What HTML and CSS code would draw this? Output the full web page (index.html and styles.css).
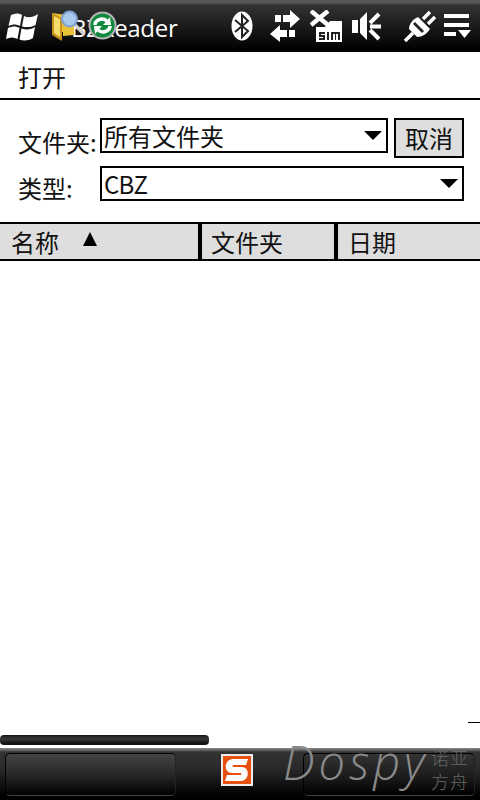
FILE: index.html
```html
<!DOCTYPE html>
<html lang="zh-CN">
<head>
    <meta charset="UTF-8">
    <meta name="viewport" content="width=device-width, initial-scale=1.0">
    <title>BZReader</title>
    <link rel="stylesheet" href="styles.css">
</head>
<body>
    <div class="screen">
        <div class="title-bar">
            <svg class="win-flag" width="32" height="30" viewBox="0 0 32 30">
                <path fill="#fff" d="M5 3 C9 1 13 1 16 3 L14 14 C10 12 7 12 2.500 14 Z"/>
                <path fill="#fff" d="M18 4 C22 6 26 6 32 2 L29.500 13 C25 15.500 20 15.500 16 14.500 Z"/>
                <path fill="#fff" d="M2 16 C7 14 10 14 13.500 16 L11.500 27 C8 25 4 25 0 27 Z"/>
                <path fill="#fff" d="M15.500 16.500 C20 18 24 18 29 15 L27 26 C22 29 17 29 13.500 27.500 Z"/>
            </svg>
            <span class="app-name">BZReader</span>
            <div class="status-icons">
                <svg width="22" height="30" viewBox="0 0 22 30">
                    <ellipse cx="11" cy="15" rx="10.5" ry="14.5" fill="#fff"/>
                    <path fill="none" stroke="#222" stroke-width="2" d="M4 9 L17 20 L11 26 V4 L17 10 L4 21"/>
                </svg>
                <svg class="arrows" width="30" height="32" viewBox="0 0 30 32">
                    <path fill="#fff" d="M5 5 H11 V12 H5 Z M13 5 H20 V0 L30 9 L20 18 V12 H13 Z"/>
                    <path fill="#fff" d="M0 24 L10 15 V20 H17 V27 H10 V32 Z M19 20 H25 V27 H19 Z"/>
                </svg>
                <svg width="32" height="32" viewBox="0 0 32 32">
                    <path fill="none" stroke="#fff" stroke-width="4.5" d="M1 1 L18 15 M18 1 L1 15"/>
                    <path fill="#fff" d="M6 17 H15 L20 11 H32 V32 H6 Z"/>
                    <path fill="#222" d="M9 22 H15 V24 H11 V25 H15 V30 H9 V28 H13 V27 H9 Z M17 22 H19 V30 H17 Z M21 22 H30 V30 H28 V24 H26 V30 H25 V24 H23 V30 H21 Z"/>
                </svg>
                <svg width="30" height="30" viewBox="0 0 30 30">
                    <path fill="#fff" d="M0 9 H6 V22 H0 Z M8 8 L15 1 V29 L8 22 Z"/>
                    <path fill="none" stroke="#fff" stroke-width="4" d="M18 12 L27 3 M18 15.5 H29 M18 19 L27 28"/>
                </svg>
                <svg class="plug" width="32" height="32" viewBox="0 0 32 32">
                    <path fill="none" stroke="#fff" stroke-width="3.5" d="M1 31 L9 23 M19 9 L26 2 M24 14 L31 7"/>
                    <path fill="#fff" d="M14 7 L26 19 C23 24 18 27 13 27 L5 19 C5 14 9 9 14 7 Z"/>
                    <path fill="#222" d="M11 12 L20 21 L18 23 L9 14 Z"/>
                </svg>
                <svg class="menu-icon" width="27" height="24" viewBox="0 0 27 24">
                    <path fill="#fff" d="M0 0 H25 V4 H0 Z M0 9 H25 V13 H0 Z M0 18 H12 V22 H0 Z M14 16 H27 L20.5 24 Z"/>
                </svg>
            </div>
            <svg class="app-icons" width="66" height="32" viewBox="0 0 66 32">
                <path fill="#e9c23a" d="M1 3 L23 6 V25 L12 26 V22 L1 22 Z"/>
                <path fill="#c8921a" d="M1 3 L11 8 V31 L1 25 Z"/>
                <path fill="#f6dc6a" d="M3 6 L9 9 V27 L3 23 Z"/>
                <path fill="none" stroke="#d0d0d0" stroke-width="3.5" d="M24 15 L33 24"/>
                <circle cx="18.5" cy="9" r="7.5" fill="#a9c8ee" stroke="#7f9fd0" stroke-width="2"/>
                <circle cx="51.5" cy="15.5" r="13" fill="#0f8a3c" stroke="#b5b5b5" stroke-width="2"/>
                <path fill="none" stroke="#fff" stroke-width="3.5" d="M44 15 C44 10 51 7 56 11 M59 16 C59 21 52 24 47 20"/>
                <path fill="#fff" d="M52 15 L60 15 L59 7 Z M51 16 L43 16 L44 24 Z"/>
            </svg>
        </div>

        <div class="menu-row">打开</div>

        <div class="form">
            <span class="form-label">文件夹:</span>
            <div class="select">
                <span>所有文件夹</span>
                <i class="select-arrow"></i>
            </div>
            <div class="cancel-btn">取消</div>
            <span class="form-label type-label">类型:</span>
            <div class="select type-select">
                <span class="type-value">CBZ</span>
                <i class="select-arrow"></i>
            </div>
        </div>

        <div class="list-header">
            <div class="col col-name">名称<i class="sort-arrow"></i></div>
            <div class="col col-folder">文件夹</div>
            <div class="col col-date">日期</div>
        </div>

        <div class="list-body">
            <div class="list-tick"></div>
            <div class="scrollbar"></div>
        </div>

        <div class="bottom-bar">
            <div class="softkey"></div>
            <svg class="ime-icon" width="32" height="32" viewBox="0 0 32 32">
                <rect width="32" height="32" fill="#ececec"/>
                <rect x="2" y="2" width="28" height="28" fill="#e8500e"/>
                <path fill="#fff" d="M27 5 L25 11 H13 C11 11 11 13 13 13 H21 C29 13 29 27 19 27 H4 L6 21 H19 C21 21 21 19 19 19 H11 C2 19 3 5 12 5 Z"/>
            </svg>
            <div class="softkey softkey-right"></div>
            <div class="watermark">
                <span class="wm-name">Dospy</span>
                <span class="wm-cn">诺亚<br>方舟</span>
            </div>
        </div>
    </div>
</body>
</html>
```

FILE: styles.css
```css
* {
    box-sizing: border-box;
}

html, body {
    margin: 0;
    padding: 0;
}

body {
    background: #fff;
    color: #111;
    font-family: "Noto Sans CJK SC", "Open Sans", sans-serif;
    font-size: 24px;
}

.screen {
    width: 480px;
    height: 800px;
    display: flex;
    flex-direction: column;
    overflow: hidden;
}

/* top bar */
.title-bar {
    height: 52px;
    flex: none;
    position: relative;
    display: flex;
    align-items: center;
    padding-left: 6px;
    background: linear-gradient(to bottom, #5a5a5a 0, #555 3px, #333 5px, #000 50px);
}
.win-flag {
    flex: none;
    margin-top: 2px;
}
.app-name {
    margin-left: 33px;
    color: #fff;
    font-family: "Open Sans", sans-serif;
    font-size: 24px;
    letter-spacing: -0.3px;
    margin-top: 2px;
}
.status-icons {
    margin-left: auto;
    margin-right: 9px;
    display: flex;
    align-items: center;
    gap: 10px;
}
.arrows {
    margin-left: 7px;
}
.plug {
    margin-left: 12px;
}
.menu-icon {
    margin-left: -2px;
}
.app-icons {
    position: absolute;
    left: 51px;
    top: 10px;
}

.menu-row {
    height: 48px;
    flex: none;
    padding: 5px 0 0 18px;
    line-height: 40px;
    border-bottom: 2px solid #000;
}

/* form */
.form {
    flex: none;
    display: grid;
    grid-template-columns: 76px 288px 70px;
    column-gap: 6px;
    row-gap: 8px;
    padding: 18px 16px 21px 18px;
}
.form-label {
    height: 40px;
    line-height: 34px;
    padding-top: 7px;
    white-space: nowrap;
}
.type-label {
    height: 35px;
    padding-top: 5px;
    grid-column: 1;
}
.select {
    height: 35px;
    border: 2px solid #000;
    display: flex;
    align-items: center;
    justify-content: space-between;
    padding: 0 4px 0 2px;
    line-height: 30px;
}
.type-select {
    grid-column: 2 / 4;
}
.type-value {
    letter-spacing: -0.7px;
}
.select-arrow {
    width: 0;
    height: 0;
    border-left: 9px solid transparent;
    border-right: 9px solid transparent;
    border-top: 9px solid #000;
}
.cancel-btn {
    height: 40px;
    background: #dedede;
    border: 2px solid #000;
    text-align: center;
    line-height: 36px;
}

/* list */
.list-header {
    height: 39px;
    flex: none;
    display: flex;
    background: #dedede;
    border-top: 2px solid #000;
    border-bottom: 2px solid #000;
    line-height: 36px;
}
.col {
    display: flex;
    align-items: center;
}
.col-name {
    width: 202px;
    padding-left: 11px;
    border-right: 4px solid #000;
}
.col-folder {
    width: 136px;
    padding-left: 9px;
    border-right: 4px solid #000;
}
.col-date {
    flex: 1;
    padding-left: 10px;
}
.sort-arrow {
    width: 0;
    height: 0;
    margin: 0 0 5px 24px;
    border-left: 7px solid transparent;
    border-right: 7px solid transparent;
    border-bottom: 14px solid #000;
}
.list-body {
    flex: 1;
    display: flex;
    flex-direction: column;
    justify-content: flex-end;
    padding-bottom: 3px;
}
.list-tick {
    align-self: flex-end;
    width: 12px;
    height: 1px;
    margin-bottom: 12px;
    background: #000;
}
.scrollbar {
    width: 209px;
    height: 10px;
    border-radius: 4px;
    background: linear-gradient(to bottom, #111 0, #2e302e 2px, #333 5px, #1a1a1a 7px, #111 100%);
}

/* bottom bar */
.bottom-bar {
    height: 52px;
    flex: none;
    position: relative;
    display: flex;
    align-items: flex-start;
    padding: 5px 5px 0;
    background: linear-gradient(to bottom, #8a8a8a 0, #666 2px, #333 4px, #2a2a2a 20px, #000 48px);
}
.softkey {
    width: 171px;
    height: 43px;
    border: 1px solid #000;
    border-bottom-color: #444;
    border-right-color: #222;
    border-radius: 5px;
    background: linear-gradient(to bottom, #444 0, #222 24px, #000 100%);
}
.softkey-right {
    width: 172px;
    margin-left: 50px;
    background: linear-gradient(to bottom, #333 0, #1a1a1a 24px, #000 100%);
}
.ime-icon {
    margin: 1px 0 0 45px;
}
.watermark {
    position: absolute;
    left: 283px;
    top: -3px;
    display: flex;
    align-items: flex-start;
    white-space: nowrap;
    color: #8a8a8a;
    pointer-events: none;
}
.wm-name {
    width: 148px;
    font-family: "Open Sans", sans-serif;
    font-style: italic;
    font-weight: 300;
    font-size: 47px;
    letter-spacing: 4px;
    line-height: 48px;
    margin-top: -7px;
}
.wm-cn {
    font-size: 18px;
    font-weight: 300;
    line-height: 24px;
    letter-spacing: 1px;
    color: #666;
}
```
